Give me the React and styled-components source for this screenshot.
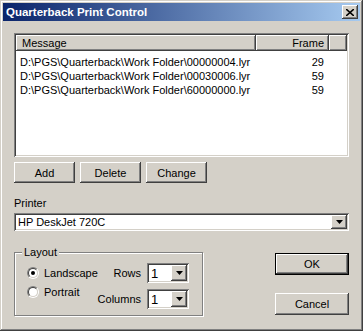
import React from 'react';
import styled, { createGlobalStyle } from 'styled-components';

const GlobalStyle = createGlobalStyle`
  html, body {
    margin: 0;
    padding: 0;
    background: #d4d0c8;
  }
  body {
    font-family: "Liberation Sans", Arial, sans-serif;
    font-size: 11px;
    color: #000;
  }
`;

const raised = `
  box-shadow: inset -1px -1px #404040, inset 1px 1px #fff,
    inset -2px -2px #808080, inset 2px 2px #d4d0c8;
`;

const sunken = `
  box-shadow: inset 1px 1px #808080, inset -1px -1px #fff,
    inset 2px 2px #404040, inset -2px -2px #d4d0c8;
`;

const Window = styled.div`
  width: 363px;
  height: 331px;
  box-sizing: border-box;
  padding: 3px;
  background: #d4d0c8;
  box-shadow: inset -1px -1px #404040, inset 1px 1px #d4d0c8,
    inset -2px -2px #808080, inset 2px 2px #fff;
  display: flex;
  flex-direction: column;
`;

const TitleBar = styled.div`
  height: 18px;
  background: linear-gradient(to right, #0a246a, #a6caf0);
  display: flex;
  align-items: center;
  justify-content: space-between;
  padding: 0 2px 0 3px;
  color: #fff;
  font-weight: bold;
  font-size: 11.5px;
`;

const CloseButton = styled.div`
  width: 16px;
  height: 14px;
  background: #d4d0c8;
  ${raised}
  display: flex;
  align-items: center;
  justify-content: center;
`;

const Content = styled.div`
  padding: 12px 11px 0 11px;
  display: flex;
  flex-direction: column;
`;

const ListView = styled.div`
  height: 124px;
  box-sizing: border-box;
  padding: 2px;
  background: #fff;
  ${sunken}
`;

const HeaderRow = styled.div`
  display: flex;
  height: 16px;
`;

const HeaderCell = styled.div`
  box-sizing: border-box;
  width: ${(p) => (p.$w ? `${p.$w}px` : 'auto')};
  flex: ${(p) => (p.$w ? 'none' : '1')};
  background: #d4d0c8;
  ${raised}
  padding: 0 5px 0 6px;
  line-height: 16px;
  text-align: ${(p) => p.$align || 'left'};
`;

const Rows = styled.div`
  padding-top: 4px;
`;

const Row = styled.div`
  display: flex;
  height: 14px;
  line-height: 14px;
`;

const Cell = styled.div`
  box-sizing: border-box;
  width: ${(p) => p.$w}px;
  padding: ${(p) => (p.$align === 'right' ? '0 5px 0 0' : '0 0 0 4px')};
  text-align: ${(p) => p.$align || 'left'};
  white-space: nowrap;
`;

const ButtonRow = styled.div`
  display: flex;
  gap: 5px;
  margin-top: 5px;
`;

const Button = styled.div`
  box-sizing: border-box;
  width: ${(p) => p.$w}px;
  height: ${(p) => p.$h}px;
  background: #d4d0c8;
  ${raised}
  display: flex;
  align-items: center;
  justify-content: center;
`;

const DefaultButton = styled(Button)`
  box-shadow: inset 1px 1px #000, inset -1px -1px #000,
    inset -2px -2px #404040, inset 2px 2px #fff,
    inset -3px -3px #808080, inset 3px 3px #d4d0c8;
`;

const FieldLabel = styled.div`
  margin-top: 13px;
  line-height: 14px;
`;

const Combo = styled.div`
  box-sizing: border-box;
  width: ${(p) => (p.$w ? `${p.$w}px` : '100%')};
  height: ${(p) => p.$h}px;
  margin-top: ${(p) => p.$mt || 0}px;
  padding: 2px;
  background: #fff;
  ${sunken}
  display: flex;
  align-items: center;
  flex: none;
`;

const ComboText = styled.div`
  flex: 1;
  padding-left: 2px;
  font-size: ${(p) => p.$fs || 11}px;
`;

const DropButton = styled.div`
  width: 16px;
  height: 100%;
  background: #d4d0c8;
  ${raised}
  display: flex;
  align-items: center;
  justify-content: center;
`;

const BottomArea = styled.div`
  display: flex;
  justify-content: space-between;
  margin-top: 21px;
`;

const GroupBox = styled.div`
  position: relative;
  width: 189px;
  height: 64px;
  box-sizing: border-box;
  border: 1px solid #808080;
  box-shadow: inset 1px 1px #fff, 1px 1px #fff;
  padding: 10px 13px 0 12px;
  display: grid;
  grid-template-columns: 1fr auto;
`;

const Legend = styled.div`
  position: absolute;
  top: -8px;
  left: 7px;
  padding: 0 2px;
  background: #d4d0c8;
  line-height: 14px;
`;

const RadioColumn = styled.div`
  display: flex;
  flex-direction: column;
  min-width: 0;
`;

const RadioRow = styled.div`
  display: flex;
  align-items: center;
  gap: 5px;
  height: 19px;
  white-space: nowrap;
`;

const RadioOuter = styled.span`
  box-sizing: border-box;
  width: 12px;
  height: 12px;
  flex: none;
  border-radius: 50%;
  border: 1px solid;
  border-color: #808080 #fff #fff #808080;
  display: flex;
`;

const RadioInner = styled.span`
  box-sizing: border-box;
  flex: 1;
  border-radius: 50%;
  border: 1px solid;
  border-color: #404040 #d4d0c8 #d4d0c8 #404040;
  background: #fff;
  display: flex;
  align-items: center;
  justify-content: center;

  &::after {
    content: '';
    width: 4px;
    height: 4px;
    border-radius: 50%;
    background: ${(p) => (p.$checked ? '#000' : 'transparent')};
  }
`;

const ControlColumn = styled.div`
  display: flex;
  flex-direction: column;
  gap: 6px;
`;

const ControlRow = styled.div`
  display: flex;
  align-items: center;
  justify-content: flex-end;
  gap: 6px;
`;

const SideButtons = styled.div`
  display: flex;
  flex-direction: column;
  gap: 18px;
  padding-top: 1px;
`;

const Arrow = () => (
  <svg width="7" height="4" viewBox="0 0 7 4">
    <path d="M0 0H7L3.5 4Z" fill="#000" />
  </svg>
);

const CloseIcon = () => (
  <svg width="8" height="7" viewBox="0 0 8 7">
    <path d="M0 0L8 7M8 0L0 7" stroke="#000" strokeWidth="1.6" />
  </svg>
);

const Radio = ({ checked, label }) => (
  <RadioRow>
    <RadioOuter>
      <RadioInner $checked={checked} />
    </RadioOuter>
    {label}
  </RadioRow>
);

const items = [
  { path: 'D:\\PGS\\Quarterback\\Work Folder\\00000004.lyr', frame: 29 },
  { path: 'D:\\PGS\\Quarterback\\Work Folder\\00030006.lyr', frame: 59 },
  { path: 'D:\\PGS\\Quarterback\\Work Folder\\60000000.lyr', frame: 59 },
];

export default function App() {
  return (
    <>
      <GlobalStyle />
      <Window>
        <TitleBar>
          <span>Quarterback Print Control</span>
          <CloseButton>
            <CloseIcon />
          </CloseButton>
        </TitleBar>
        <Content>
          <ListView>
            <HeaderRow>
              <HeaderCell $w={240}>Message</HeaderCell>
              <HeaderCell $w={73} $align="right">Frame</HeaderCell>
              <HeaderCell />
            </HeaderRow>
            <Rows>
              {items.map((it) => (
                <Row key={it.path}>
                  <Cell $w={240}>{it.path}</Cell>
                  <Cell $w={73} $align="right">{it.frame}</Cell>
                </Row>
              ))}
            </Rows>
          </ListView>
          <ButtonRow>
            <Button $w={61} $h={21}>Add</Button>
            <Button $w={61} $h={21}>Delete</Button>
            <Button $w={61} $h={21}>Change</Button>
          </ButtonRow>
          <FieldLabel>Printer</FieldLabel>
          <Combo $h={18} $mt={3}>
            <ComboText>HP DeskJet 720C</ComboText>
            <DropButton>
              <Arrow />
            </DropButton>
          </Combo>
          <BottomArea>
            <GroupBox>
              <Legend>Layout</Legend>
              <RadioColumn>
                <Radio checked label="Landscape" />
                <Radio label="Portrait" />
              </RadioColumn>
              <ControlColumn>
                <ControlRow>
                  Rows
                  <Combo $w={42} $h={20}>
                    <ComboText $fs={13}>1</ComboText>
                    <DropButton>
                      <Arrow />
                    </DropButton>
                  </Combo>
                </ControlRow>
                <ControlRow>
                  Columns
                  <Combo $w={42} $h={20}>
                    <ComboText $fs={13}>1</ComboText>
                    <DropButton>
                      <Arrow />
                    </DropButton>
                  </Combo>
                </ControlRow>
              </ControlColumn>
            </GroupBox>
            <SideButtons>
              <DefaultButton $w={74} $h={22}>OK</DefaultButton>
              <Button $w={74} $h={22}>Cancel</Button>
            </SideButtons>
          </BottomArea>
        </Content>
      </Window>
    </>
  );
}
